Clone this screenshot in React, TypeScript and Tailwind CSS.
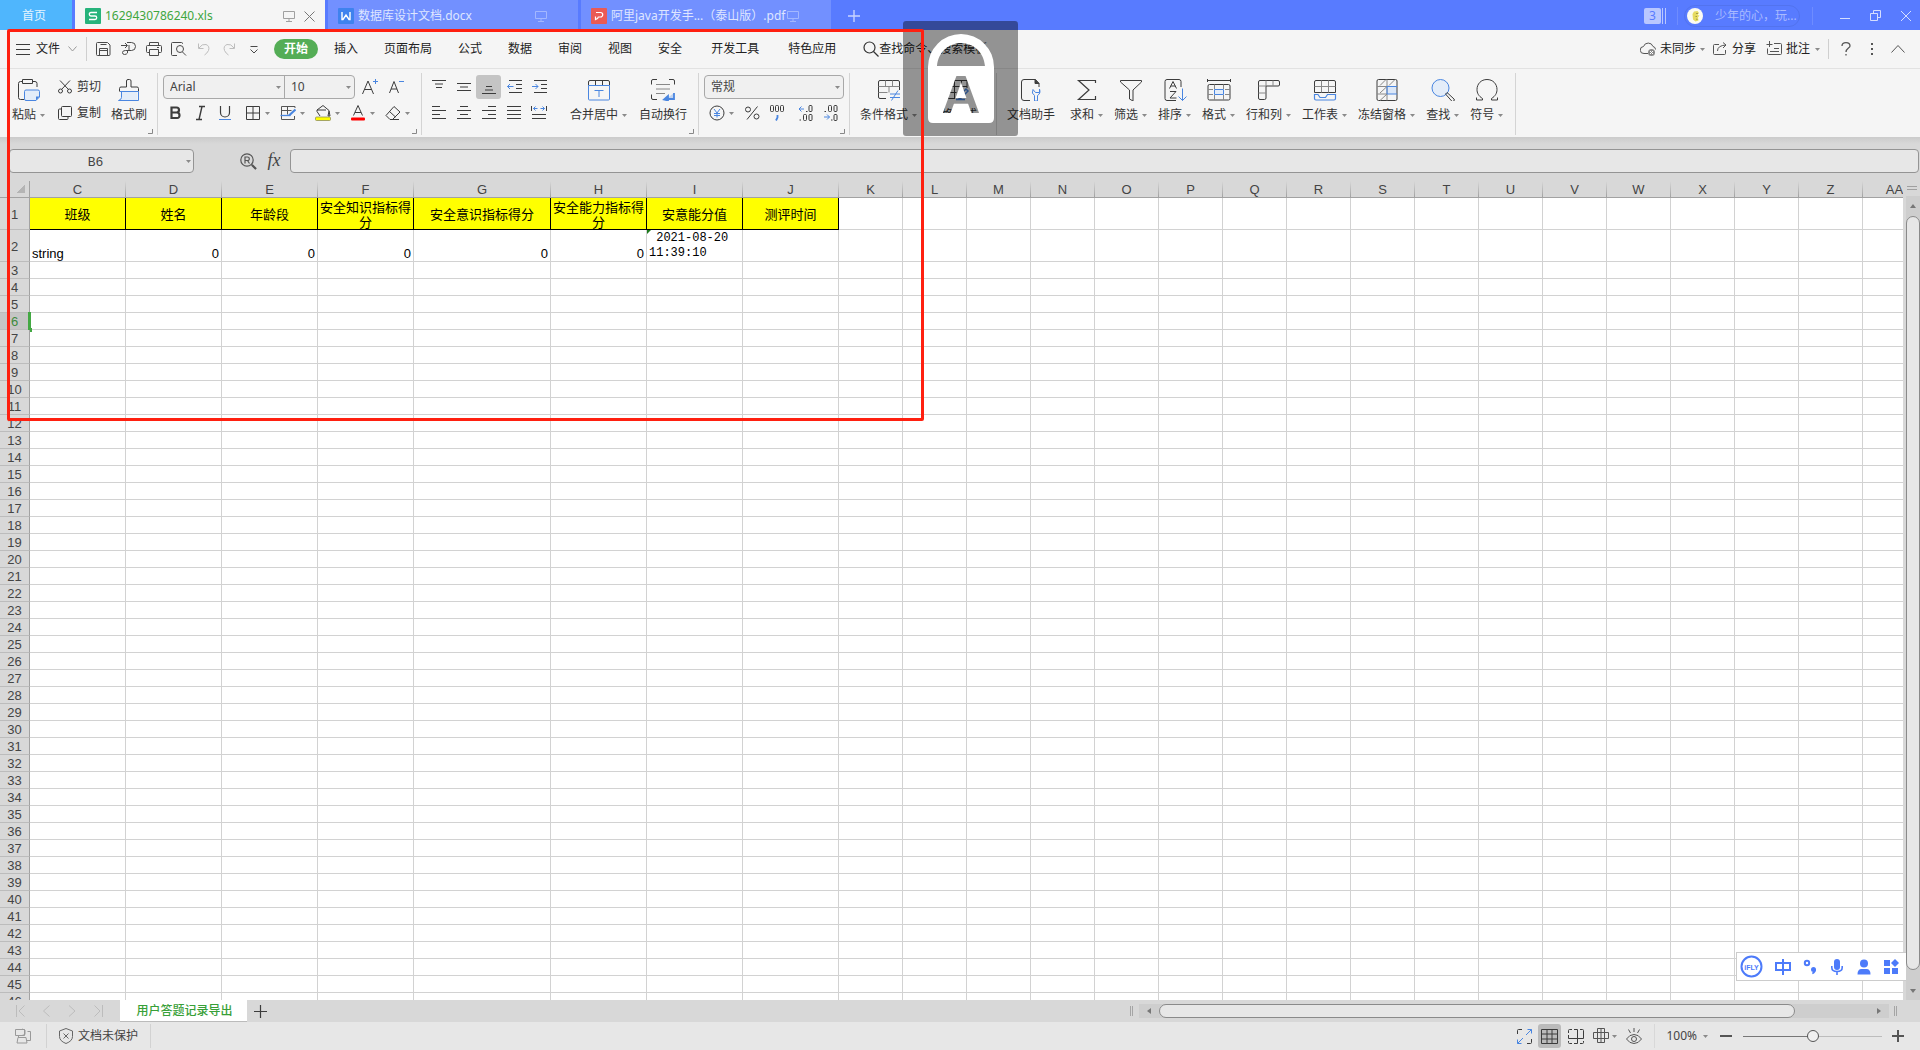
import React from "react";

type Kids = { children?: React.ReactNode };

const DARK = "#3c3c3c";
const BLUE = "#4a86e0";

function Ico({ w = 16, h = 16, stroke = DARK, sw = 1, children }: Kids & { w?: number; h?: number; stroke?: string; sw?: number }) {
  return (
    <svg width={w} height={h} viewBox={`0 0 ${w} ${h}`} fill="none" stroke={stroke} strokeWidth={sw} className="shrink-0" aria-hidden="true">
      {children}
    </svg>
  );
}

function Caret() {
  return (
    <svg width="5" height="3" viewBox="0 0 5 3" className="shrink-0" fill="#8a8a8a" aria-hidden="true">
      <path d="M0 0H5L2.5 3Z" />
    </svg>
  );
}

function Monitor({ color }: { color: string }) {
  return (
    <Ico w={12} h={12} stroke={color}>
      <path d="M.5 1.5h11v7H.5zM6 8.500v2.500M3 11.500h6" />
    </Ico>
  );
}

/* ---------- title bar ---------- */

function TitleBar() {
  return (
    <header className="flex h-[30px] shrink-0 bg-[#587bff] text-xs">
      <button className="w-[72px] bg-[#4fb6fd] pr-1 pt-[2px] text-[#e4f4ff]">首页</button>
      <div className="ml-[3px] flex w-[250px] items-center bg-[#f5f5f5] pl-[10px] pr-[10px] pt-[2px]">
        <span className="flex size-4 items-center justify-center rounded-[1px] bg-[#27b37b]">
          <Ico w={10} h={10} stroke="#fff" sw={1.3}>
            <path d="M9 1.500H3q-1.700 0-1.700 1.700T3 5h4q1.700 0 1.700 1.700T7 8.500H1" />
          </Ico>
        </span>
        <span className="ml-1 flex-1 text-[#3ea63e]">1629430786240.xls</span>
        <Monitor color="#a0a0a0" />
        <button aria-label="关闭标签" className="ml-[9px]">
          <Ico w={11} h={11} stroke="#777">
            <path d="M.5.5l10 10M10.500.5l-10 10" />
          </Ico>
        </button>
      </div>
      <div className="ml-[3px] flex w-[250px] items-center bg-[#7290ff] pl-[10px] pt-[2px] text-[#dfe6ff]">
        <span className="flex size-4 items-center justify-center rounded-[1px] bg-[#3f82ee]">
          <Ico w={10} h={10} stroke="#fff" sw={1.4}>
            <path d="M1 1v7.500h1L5 4l3 4.500h1V1" />
          </Ico>
        </span>
        <span className="ml-1 flex-1">数据库设计文档.docx</span>
        <span className="mr-[31px]">
          <Monitor color="#a3b7ff" />
        </span>
      </div>
      <div className="ml-[3px] flex w-[250px] items-center bg-[#7290ff] pl-[10px] pt-[2px] text-[#dfe6ff]">
        <span className="flex size-4 items-center justify-center rounded-[1px] bg-[#ea5a55]">
          <Ico w={10} h={10} stroke="#fff" sw={1.2}>
            <path d="M2 1.500h4.500a2.200 2.200 0 010 4.500H4.500q-.5 0-.5.500t-.5 1L1.500 8.500V5.500" />
          </Ico>
        </span>
        <span className="ml-1 mr-[2px] whitespace-nowrap">阿里java开发手...（泰山版）.pdf</span>
        <Monitor color="#a3b7ff" />
      </div>
      <button aria-label="新建标签" className="ml-[17px] pt-[2px]">
        <Ico w={12} h={12} stroke="#c8d3ff" sw={1.400}>
          <path d="M6 0v12M0 6h12" />
        </Ico>
      </button>
      <div className="ml-auto flex items-center pt-[2px] text-[#a9baff]">
        <span className="flex h-4 w-[17px] items-center justify-center rounded-[2px] bg-[#b9c7ff] text-xs leading-4 text-[#587bff]">3</span>
        <span className="ml-px h-4 w-1 border-x border-[#b9c7ff]" />
        <span className="ml-[11px] h-[18px] w-px bg-[#6e8cff]" />
        <button className="ml-[6px] flex h-[22px] w-[116px] items-center rounded-full border border-[#5273ee] pl-[2px]">
          <svg width="16" height="16" viewBox="0 0 16 16" aria-hidden="true">
            <circle cx="8" cy="8" r="8" fill="#fbfbf3" />
            <path d="M5.500 6L7 3.500l3.500-.5L12 5l-1.500 2 2 .5-1.500 2 .5 3-3 1-2.500-2z" fill="#e6db62" />
            <path d="M9 5.500h2M8.500 8.500h1.500M9 11l1.500.5" stroke="#9b9346" strokeWidth=".9" />
          </svg>
          <span className="ml-3 whitespace-nowrap">少年的心，玩...</span>
        </button>
        <span className="ml-3 h-[18px] w-px bg-[#6e8cff]" />
        <button aria-label="最小化" className="ml-[27px]">
          <Ico w={10} h={12} stroke="#d5deff">
            <path d="M0 8.500h10" />
          </Ico>
        </button>
        <button aria-label="还原" className="ml-5">
          <Ico w={11} h={12} stroke="#d5deff">
            <path d="M.5 3.500h7v7h-7zM3.500 3V.5h7v7H8" />
          </Ico>
        </button>
        <button aria-label="关闭" className="ml-5 mr-[9px]">
          <Ico w={10} h={10} stroke="#d5deff">
            <path d="M0 0l10 10M10 0L0 10" />
          </Ico>
        </button>
      </div>
    </header>
  );
}

/* ---------- menu bar ---------- */

const quick: { label: string; dim?: boolean; art: React.ReactNode }[] = [
  { label: "保存", art: <path d="M1.500 1.500h10l2.500 2.500v9.500a1 1 0 01-1 1h-11.500a1 1 0 01-1-1v-11a1 1 0 011-1zM4.500 3.500h6M3.500 14.500v-7h8v7M3.500 9.500h8" /> },
  { label: "输出为PDF", art: <path d="M0 4.500h6M4 2l2.500 2.500L4 7M6 1.500h4.500a4 4 0 010 8H8V4M8 9.500H4.500q-3 0-3 2t2 2 3-1.500V9.500" /> },
  { label: "打印", art: <path d="M3.500 4.500v-3h9v3M3.500 11.500h-2a1 1 0 01-1-1v-5a1 1 0 011-1h13a1 1 0 011 1v5a1 1 0 01-1 1h-2M3.500 8.500h9v6h-9zM11 6.500h2" /> },
  { label: "打印预览", art: <path d="M6 14.500H1.500a1 1 0 01-1-1v-11a1 1 0 011-1h9a1 1 0 011 1V3M9 4.500a3.500 3.500 0 110 7 3.500 3.500 0 010-7M11.500 11l3.500 3.500" /> },
  { label: "撤销", dim: true, art: <path d="M2.500 2.500v5H7.500M3 7q3-4.500 7-3.500 4 1.500 2.500 6-1.500 3-4 4.500" /> },
  { label: "恢复", dim: true, art: <path d="M13.500 2.500v5H8.500M13 7q-3-4.500-7-3.500-4 1.500-2.500 6 1.500 3 4 4.500" /> },
  { label: "更多", art: <path d="M4.500 5.500h7M4.500 8.500l3.500 3.500 3.500-3.500" /> },
];

const tabs: [string, boolean][] = [
  ["插入", false],
  ["页面布局", false],
  ["公式", false],
  ["数据", false],
  ["审阅", false],
  ["视图", false],
  ["安全", false],
  ["开发工具", true],
  ["特色应用", false],
];

function MenuBar() {
  return (
    <nav className="flex h-[39px] shrink-0 items-center border-b border-[#e2e2e2] bg-[#f5f5f5] pl-4 text-xs text-[#222]">
      <button className="flex items-center">
        <Ico w={14} h={11}>
          <path d="M0 .5h14M0 5.500h14M0 10.500h14" />
        </Ico>
        <span className="ml-[6px]">文件</span>
        <span className="ml-2">
          <Ico w={9} h={6} stroke="#999">
            <path d="M.5.500l4 4.500 4-4.500" />
          </Ico>
        </span>
      </button>
      <span className="ml-[9px] mr-1 h-6 w-px bg-[#cfcfcf]" />
      {quick.map((q) => (
        <button key={q.label} aria-label={q.label} className="flex w-[25px] justify-center">
          <Ico stroke={q.dim ? "#bdbdbd" : "#4a4a4a"}>{q.art}</Ico>
        </button>
      ))}
      <button className="ml-2 mr-[3px] h-5 w-11 rounded-full bg-[#54ad56] font-bold text-white">开始</button>
      {tabs.map(([t, wide]) => (
        <button key={t} className={wide ? "px-4" : "px-[13px]"}>
          {t}
        </button>
      ))}
      <label className="ml-[14px] flex items-center">
        <Ico stroke="#333" sw={1.2}>
          <circle cx="6.500" cy="6.500" r="5.500" />
          <path d="M10.500 10.500l5 5" />
        </Ico>
        <input aria-label="查找命令、搜索模板" placeholder="查找命令、搜索模板" className="w-28 bg-transparent outline-none placeholder:text-[#222] placeholder:opacity-100" />
      </label>
      <div className="ml-auto flex items-center">
        <button className="flex items-center">
          <Ico stroke="#555">
            <path d="M8 12.500H4a3.500 3.500 0 01-.5-7 5 5 0 019.500 0q2.500.5 2.500 3" />
            <circle cx="11.500" cy="11.500" r="3.500" fill="#8a8a8a" stroke="none" />
            <path d="M10 10l3 3M13 10l-3 3" stroke="#fff" />
          </Ico>
          <span className="ml-1 mr-1">未同步</span>
          <Caret />
        </button>
        <button className="ml-2 flex items-center">
          <Ico w={14} h={14} stroke="#555">
            <path d="M6 2.500H1.500a1 1 0 00-1 1v8a1 1 0 001 1h10a1 1 0 001-1V8M4.500 9q0-5.500 8.500-6M10 .5l3 2.500-3 3" />
          </Ico>
          <span className="ml-[5px]">分享</span>
        </button>
        <button className="ml-[10px] flex items-center">
          <Ico stroke="#555">
            <path d="M3.500 0v6M.5 3.500h6M8 2.500h6.500a1 1 0 011 1v9a1 1 0 01-1 1h-12a1 1 0 01-1-1V7.500M8 7.500h5M4 10.500h9" />
          </Ico>
          <span className="ml-1 mr-[5px]">批注</span>
          <Caret />
        </button>
        <span className="ml-2 h-5 w-px bg-[#cfcfcf]" />
        <button aria-label="帮助" className="ml-3">
          <Ico w={10} h={14} stroke="#555" sw={1.3}>
            <path d="M1 4Q1 .700 5 .700T9 4c0 2-4 2.500-4 6M5 12v1.500" />
          </Ico>
        </button>
        <button aria-label="更多选项" className="ml-5">
          <Ico w={2} h={12} stroke="none">
            <path d="M0 0h2v2H0zM0 5h2v2H0zM0 10h2v2H0z" fill="#555" />
          </Ico>
        </button>
        <button aria-label="折叠功能区" className="ml-[18px] mr-[15px]">
          <Ico w={14} h={8} stroke="#555">
            <path d="M.5 7.500l6.500-7 6.500 7" />
          </Ico>
        </button>
      </div>
    </nav>
  );
}

/* ---------- ribbon ---------- */

function Group({ className, corner, children }: Kids & { className: string; corner?: boolean }) {
  return (
    <section className={`relative my-1 flex h-[62px] shrink-0 items-start border-r border-[#d4d4d4] ${className}`}>
      {children}
      {corner && (
        <span className="absolute bottom-[1px] right-1">
          <Ico w={5} h={5} stroke="#888">
            <path d="M4.500 0v4.500H0" />
          </Ico>
        </span>
      )}
    </section>
  );
}

function Big({ label, caret, children }: Kids & { label: string; caret?: boolean }) {
  return (
    <button className="flex flex-col items-center pt-[6px]">
      <Ico w={24} h={22}>{children}</Ico>
      <span className="mt-[6px] flex items-center gap-1 whitespace-nowrap leading-4">
        {label}
        {caret && <Caret />}
      </span>
    </button>
  );
}

function Small({ label, caret, wide, active, children }: Kids & { label: string; caret?: boolean; wide?: boolean; active?: boolean }) {
  return (
    <button
      aria-label={label}
      className={`flex h-6 items-center justify-center gap-1 rounded-[3px] ${wide ? "w-[35px]" : "w-[25px]"} ${active ? "bg-[#c4c4c4]" : ""}`}
    >
      <Ico>{children}</Ico>
      {caret && <Caret />}
    </button>
  );
}

function Picker({ label, value, className }: { label: string; value: string; className: string }) {
  return (
    <label className={`relative flex h-full items-center ${className}`}>
      <select aria-label={label} className="h-full w-full appearance-none bg-transparent pl-[6px] text-xs text-[#444] outline-none">
        <option>{value}</option>
      </select>
      <span className="pointer-events-none absolute right-[3px] top-[10px]">
        <Caret />
      </span>
    </label>
  );
}

function Ribbon() {
  return (
    <div className="relative z-10 flex h-[68px] shrink-0 overflow-hidden bg-[#f5f5f5] text-xs text-[#333]">
      <Group className="w-[158px] pl-3" corner>
        <Big label="粘贴" caret>
          <path d="M7 20.500H3.500a2 2 0 01-2-2v-14a2 2 0 012-2h2M15.500 2.500H18a2 2 0 012 2V8M5.500.5h10v4h-10z" />
          <path d="M9 11h12q1.500 0 1.500 1.500V18l-3.500 3.500H9q-1.500 0-1.500-1.500v-7.500Q7.500 11 9 11z" stroke={BLUE} fill="#e4edf9" />
          <path d="M22.500 17.500L19 21.500v-4z" fill={BLUE} stroke="none" />
        </Big>
        <div className="ml-[13px] flex flex-col gap-[2px] pt-[2px]">
          <button className="flex h-6 items-center">
            <Ico w={14} h={14}>
              <path d="M2 .5l8.500 9M12 .5l-8.500 9" />
              <circle cx="2.500" cy="11" r="2" />
              <circle cx="11.500" cy="11" r="2" />
            </Ico>
            <span className="ml-[5px]">剪切</span>
          </button>
          <button className="flex h-6 items-center">
            <Ico w={14} h={14}>
              <path d="M4.500.5h8a1 1 0 011 1v8a1 1 0 01-1 1h-8a1 1 0 01-1-1v-8a1 1 0 011-1zM3.500 3h-2a1 1 0 00-1 1v8.500a1 1 0 001 1H9a1 1 0 001-1v-2" />
            </Ico>
            <span className="ml-[5px]">复制</span>
          </button>
        </div>
        <div className="ml-[10px]">
          <Big label="格式刷">
            <path d="M4 12h16v9.500H4z" fill="#e4edf9" stroke="none" />
            <path d="M2.500 12.500V9.500q0-1.500 1.500-1.500h5.500V2q0-1.500 1.500-1.500h1.500Q14 .5 14 2v6h6q1.500 0 1.500 1.500v3" />
            <path d="M3 12.500h18.500M4.500 12.500v6q0 2-3 3h20v-9" stroke={BLUE} />
          </Big>
        </div>
      </Group>

      <Group className="w-[264px] flex-col gap-[2px] pl-[5px] pt-[2px]" corner>
        <div className="flex">
          <div className="flex h-6 w-[192px] rounded-[4px] border border-[#a8a8a8] bg-[#f0f0f0]">
            <Picker label="字体" value="Arial" className="w-[121px] border-r border-[#a8a8a8]" />
            <Picker label="字号" value="10" className="flex-1" />
          </div>
          <div className="ml-[2px] flex">
            <button aria-label="增大字号" className="flex h-6 w-[26px] items-center justify-center">
              <Ico>
                <path d="M.5 15L6 2l5.500 13M2.500 10.500h7" />
                <path d="M13.500 0v5M11 2.500h5" stroke={BLUE} />
              </Ico>
            </button>
            <button aria-label="减小字号" className="flex h-6 w-[26px] items-center justify-center">
              <Ico>
                <path d="M1.500 14L6 2.500 10.500 14M3 10h6" />
                <path d="M11 2.500h5" stroke={BLUE} />
              </Ico>
            </button>
          </div>
        </div>
        <div className="flex">
          <Small label="加粗">
            <path d="M3.500 2.500h5q2.500 0 2.500 2.500T8.500 7.500H3.500zM3.500 7.500H9q2.500 0 2.500 2.800T9 13H3.500z" strokeWidth="2.200" />
          </Small>
          <Small label="倾斜">
            <path d="M6 1.500h6M3 14.500h6M9 1.500L6 14.500" strokeWidth="1.400" />
          </Small>
          <Small label="下划线">
            <path d="M2.500 1v6.500a4.500 4.500 0 009 0V1" strokeWidth="1.200" />
            <path d="M1 14.500h12" stroke={BLUE} />
          </Small>
          <div className="ml-[2px] flex">
            <Small label="边框" caret wide>
              <path d="M1.500 1.500h13v13h-13zM8 1.500v13M1.500 8h13" />
            </Small>
            <Small label="绘图边框" caret wide>
              <path d="M15 3V1.500H1.500v13h13V11M1.500 5.500h10M7.500 1.500v8" stroke="#555" />
              <path d="M9 10.500l6.500-6" stroke={BLUE} strokeWidth="2.200" />
              <path d="M.5 10.500h10" stroke={BLUE} strokeWidth="1.300" />
            </Small>
            <Small label="填充颜色" caret wide>
              <path d="M8 .5l6 5 1 5.500H13L14 6M8 .5L2 5h9M2 5v1.500L5 11" />
              <rect x=".5" y="12" width="15" height="3.500" rx="1" fill="#ffff00" stroke="#8f8f5a" strokeWidth=".8" />
            </Small>
            <Small label="字体颜色" caret wide>
              <path d="M3.500 10.500L8 .5l4.500 10M5 7.500h6" />
              <rect x="1" y="12.500" width="14" height="3" rx="1" fill="#ff0000" stroke="none" />
            </Small>
            <Small label="清除" caret wide>
              <path d="M9 1.500l6 5.500-7.500 7.500H5L1 10.500zM4.500 6.500l6 5.500M5 14.500h9" />
            </Small>
          </div>
        </div>
      </Group>

      <Group className="w-[277px] pl-1" corner>
        <div className="grid grid-cols-5 gap-y-[2px] pt-[2px]">
          <Small label="顶端对齐">
            <path d="M1 1.500h14M4 5h8M5 8.500h6" />
          </Small>
          <Small label="垂直居中">
            <path d="M1 4.500h14M4 8h8M1 11.500h14" />
          </Small>
          <Small label="底端对齐" active>
            <path d="M5 7.500h6M4 11h8M1 14.500h14" />
          </Small>
          <Small label="减少缩进量">
            <path d="M3 1.500h13M10 5.500h6M10 9.500h6M3 13.500h13" />
            <path d="M7.500 7.500h-6M4 5L1.500 7.500 4 10" stroke={BLUE} />
          </Small>
          <Small label="增加缩进量">
            <path d="M3 1.500h13M10 5.500h6M10 9.500h6M3 13.500h13" />
            <path d="M1 7.500h6M4.500 5L7 7.500 4.500 10" stroke={BLUE} />
          </Small>
          <Small label="左对齐">
            <path d="M1 1.500h8M1 5.500h14M1 9.500h8M1 13.500h14" />
          </Small>
          <Small label="居中">
            <path d="M4 1.500h8M1 5.500h14M4 9.500h8M1 13.500h14" />
          </Small>
          <Small label="右对齐">
            <path d="M7 1.500h8M1 5.500h14M7 9.500h8M1 13.500h14" />
          </Small>
          <Small label="两端对齐">
            <path d="M1 1.500h14M1 5.500h14M1 9.500h14M1 13.500h14" />
          </Small>
          <Small label="分散对齐">
            <path d="M.5 1v5M15.500 1v5M1 9.500h14M1 13.500h14" />
            <path d="M2.500 3.500h4M9.500 3.500h4M4.500 1.500l-2 2 2 2M11.500 1.500l2 2-2 2" stroke={BLUE} />
          </Small>
        </div>
        <div className="ml-[19px] flex gap-3">
          <Big label="合并居中" caret>
            <path d="M1.500 6.500V3q0-1.500 1.500-1.500h18q1.500 0 1.500 1.500v3.500M8.500 1.500v5M15.500 1.500v5" />
            <path d="M1.500 6.500h21V20q0 1-1 1h-19q-1 0-1-1zM7.500 11.500h9M12 11.500v6.500" stroke={BLUE} />
          </Big>
          <Big label="自动换行">
            <path d="M.5 5.500V2Q.5.500 2 .5h4M18 .5h4q1.500 0 1.500 1.500v3.500M.5 15.500V19q0 1.500 1.500 1.500h4" />
            <path d="M5 5.500h14M5 10h14M5 14.500h9" stroke="#888" />
            <path d="M23 14v6h-8M17 17l-4 3.500 4 1z" stroke={BLUE} strokeWidth="1.800" fill={BLUE} fillOpacity=".3" />
          </Big>
        </div>
      </Group>

      <Group className="w-[151px] flex-col gap-[2px] pl-[5px] pt-[2px]" corner>
        <div className="h-6 w-[140px] rounded-[4px] border border-[#a8a8a8] bg-[#f0f0f0]">
          <Picker label="数字格式" value="常规" className="w-full" />
        </div>
        <div className="flex">
          <Small label="货币格式" caret wide>
            <circle cx="8" cy="8" r="7" />
            <path d="M5 4l3 4 3-4M5 8.500h6M5 10.500h6M8 8v4.500" stroke={BLUE} />
          </Small>
          <Small label="百分比样式">
            <circle cx="4" cy="4.500" r="2.500" />
            <circle cx="12.500" cy="11.500" r="2.500" />
            <path d="M13.500 1.500L3 14.500" />
          </Small>
          <Small label="千位分隔样式">
            <rect x="1.500" y=".5" width="3" height="6" rx="1" />
            <rect x="6.500" y=".5" width="3" height="6" rx="1" />
            <rect x="11.500" y=".5" width="3" height="6" rx="1" />
            <path d="M8.500 10v2.500l-1.500 3" stroke={BLUE} strokeWidth="1.800" />
          </Small>
          <div className="ml-1 flex">
            <Small label="增加小数位数">
              <path d="M1 4h5M3.500 1.500L1 4l2.500 2.500" stroke={BLUE} />
              <rect x="11" y=".5" width="3" height="6" rx="1" />
              <rect x="5.500" y="9.500" width="3" height="6" rx="1" />
              <rect x="11" y="9.500" width="3" height="6" rx="1" />
              <path d="M8 6.500h1.500M1.500 15h1.500" />
            </Small>
            <Small label="减少小数位数">
              <rect x="5.500" y=".5" width="3" height="6" rx="1" />
              <rect x="11" y=".5" width="3" height="6" rx="1" />
              <rect x="11" y="9.500" width="3" height="6" rx="1" />
              <path d="M1.500 6.500h1.500M8 15h1.500" />
              <path d="M1 12h5.500M4 9.500L6.500 12 4 14.500" stroke={BLUE} />
            </Small>
          </div>
        </div>
      </Group>

      <Group className="w-[147px] gap-3 pl-[10px]">
        <Big label="条件格式" caret>
          <path d="M9 19.500H3q-1.500 0-1.500-1.500V3Q1.500 1.500 3 1.500h18q1.500 0 1.500 1.500v8" />
          <path d="M1.500 7.500h21M1.500 13.500h9M8.500 1.500v6M15.500 1.500v6M12 7.500v6" stroke="#888" />
          <path d="M13 15h10M13 18.500h10M21 11.500l-6.500 10" stroke={BLUE} />
        </Big>
        <Big label="表格样式" caret>
          <path d="M9 19.500H3q-1.500 0-1.500-1.500V3Q1.500 1.500 3 1.500h18V9M1.500 7.500H21M1.500 13.500h9M8.500 1.500v18M15.500 1.500v8" />
          <path d="M10 20.500h9M12 18l8-8 2 2-8 8z" stroke={BLUE} strokeWidth="1.500" />
        </Big>
      </Group>

      <Group className="w-[519px] gap-[11px] pl-[10px]">
        <div className="mr-1">
          <Big label="文档助手">
            <path d="M11 21.500H5q-2.500 0-2.500-2.500V3Q2.500.5 5 .5h11.500l3.500 4V8" />
            <path d="M16 .5v4h4z" fill={DARK} />
            <path d="M14 10.500q-2 4 1.500 6V22h3v-5.500q3.500-2 2-6.500v3.500h-4z" stroke={BLUE} />
          </Big>
        </div>
        <Big label="求和" caret>
          <path d="M20.500 4V1.500h-17L14 11 3.500 20.500h17V17" strokeWidth="1.200" />
        </Big>
        <Big label="筛选" caret>
          <path d="M1.500 1.500h21v1.500L14 11v11l-3.500-2v-9L1.500 3z" />
        </Big>
        <Big label="排序" caret>
          <path d="M13 21.500H4q-2 0-2-2V2.500Q2 .5 4 .5h12q2 0 2 2V8M6.500 9.500l3.500-7 3.500 7M7.700 7h4.600M7 12.500h6L7 19h6.500" />
          <path d="M19.500 9.500v12M15.500 17.500l4 4 4-4" stroke={BLUE} />
        </Big>
        <Big label="格式" caret>
          <path d="M.5 0v3M.5 1.500h23M23.500 0v3" />
          <rect x="1" y="5.500" width="22" height="15.500" rx="1.500" />
          <path d="M7.500 5.500V10M16.500 5.500V10M7.500 16v5M16.500 16v5M1 10.500h5M18 10.500h5M1 15.500h5M18 15.500h5" stroke="#888" />
          <path d="M7.500 10.500h9v5h-9z" stroke={BLUE} fill="#e4edf9" />
        </Big>
        <Big label="行和列" caret>
          <path d="M3 1.500h18q1.500 0 1.500 1.500v3q0 1-1.500 1H9v12q0 1.500-1.500 1.500H3q-1.500 0-1.500-1.500V3Q1.500 1.500 3 1.500z" />
          <path d="M9 1.500V7M16 1.500V7M1.500 7H9M1.500 14H9" stroke="#888" />
        </Big>
        <Big label="工作表" caret>
          <path d="M1.500 13.500V3Q1.500 1.500 3 1.500h18q1.500 0 1.500 1.500v10.500z" />
          <path d="M8.500 1.500v12M15.500 1.500v12M1.500 7.500h21" stroke="#888" />
          <path d="M1.500 15.500v4q0 1.500 1.500 1.500h18q1.500 0 1.500-1.500v-4h-8l-2 3H7l-2-3z" stroke={BLUE} strokeWidth="1.200" />
        </Big>
        <Big label="冻结窗格" caret>
          <path d="M12 7.500h10V15H12z" fill="#dbe7f8" stroke="none" />
          <rect x="2" y=".5" width="20" height="21" rx="1.500" />
          <path d="M12 .5v21M2 7.500h10M2 15h10M5 6.500l6-6M5 14L12 7.500M5 21.500L12 15M14 6.500l6-6" stroke="#888" />
          <path d="M12 7.500h10M12 15h10M12 7.500V15" stroke={BLUE} />
        </Big>
        <Big label="查找" caret>
          <circle cx="9.500" cy="9" r="8.500" stroke={BLUE} fill="#e4edf9" />
          <path d="M14.500 15l1.500-1.500 7 6.500q1 1-.3 2t-2 0z" />
        </Big>
        <Big label="符号" caret>
          <path d="M1.500 18.500v2.500h6v-1.500C3.500 17 2 14 2 10.500 2 5 6 .5 12 .5s10 4.500 10 10c0 3.500-1.500 6.500-5.500 9V21h6v-2.500" />
        </Big>
      </Group>
    </div>
  );
}

/* ---------- formula bar ---------- */

function FormulaBar() {
  return (
    <div className="flex h-11 shrink-0 items-start bg-[linear-gradient(to_bottom,#cbcbcb,#d8d8d8_7px)] pl-[9px] pt-3">
      <label className="relative flex w-[185px]">
        <input
          aria-label="名称框"
          defaultValue="B6"
          className="h-6 w-full rounded-[4px] border border-[#949494] bg-[#e7e7e7] pr-3 pt-[2px] text-center font-['Liberation_Mono',monospace] text-[13px] text-[#444] outline-none"
        />
        <span className="absolute right-[3px] top-[11px]">
          <Caret />
        </span>
      </label>
      <button aria-label="查找引用" className="ml-[46px] mt-1">
        <Ico w={17} h={17} stroke="#555" sw={1.2}>
          <circle cx="7" cy="7" r="6.200" />
          <path d="M5 10.500V4h2.500q1.800 0 1.800 1.800T7.500 7.500H5M7.500 7.500l2 3M11.500 11.500l4.500 4.500" />
          <path d="M12 12l4 4" strokeWidth="2.200" />
        </Ico>
      </button>
      <button className="ml-2 mt-px w-[18px] font-['Liberation_Serif',serif] text-lg italic leading-5 text-[#444]">fx</button>
      <input aria-label="编辑栏" className="ml-[7px] mr-px h-6 min-w-0 flex-1 rounded-[4px] border border-[#949494] bg-[#e7e7e7] px-2 text-xs outline-none" />
    </div>
  );
}

/* ---------- sheet ---------- */

type Col = { id: string; width: number; title?: string; value?: string };

const cols: Col[] = [
  { id: "C", width: 96, title: "班级", value: "string" },
  { id: "D", width: 96, title: "姓名", value: "0" },
  { id: "E", width: 96, title: "年龄段", value: "0" },
  { id: "F", width: 96, title: "安全知识指标得分", value: "0" },
  { id: "G", width: 137, title: "安全意识指标得分", value: "0" },
  { id: "H", width: 96, title: "安全能力指标得分", value: "0" },
  { id: "I", width: 96, title: "安意能分值", value: " 2021-08-20\n11:39:10" },
  { id: "J", width: 96, title: "测评时间" },
  ..."KLMNOPQRSTUVWXYZ".split("").map((id) => ({ id, width: 64 })),
  { id: "AA", width: 64 },
];

const rows = Array.from({ length: 46 }, (_, i) => i + 1);

function Cell({ row, col }: { row: number; col: Col }) {
  if (row === 1 && col.title)
    return (
      <td className="border-b border-r border-black bg-[#ffff00] p-0 text-center font-['Noto_Sans_CJK_SC',sans-serif] text-[13px] leading-[15px] text-black">
        {col.title}
      </td>
    );
  if (row === 2 && col.id === "I")
    return (
      <td className="relative border-b border-r border-[#d2d2d2] p-0 pl-[2px] pt-px align-bottom font-['Liberation_Mono',monospace] text-xs leading-[15px] text-black">
        <span className="absolute left-0 top-0">
          <Ico w={4} h={4} stroke="none">
            <path d="M0 0h4L0 4z" fill="#1e7a1e" />
          </Ico>
        </span>
        <span className="whitespace-pre-wrap">{col.value}</span>
      </td>
    );
  if (row === 2 && col.value)
    return (
      <td className={`border-b border-r border-[#d2d2d2] p-0 px-[2px] align-bottom text-[13px] leading-[14px] text-black ${col.id === "C" ? "text-left" : "text-right"}`}>
        {col.value}
      </td>
    );
  return <td className="border-b border-r border-[#d2d2d2] p-0" />;
}

function Sheet() {
  return (
    <div className="flex min-h-0 flex-1 bg-[#d8d8d8]">
      <main className="min-w-0 flex-1 overflow-hidden font-['Liberation_Sans',Arial,sans-serif]">
        <table className="w-max table-fixed border-separate border-spacing-0 bg-white text-[13px] leading-[15px] text-[#444]">
          <colgroup>
            <col style={{ width: 30 }} />
            {cols.map((c) => (
              <col key={c.id} style={{ width: c.width }} />
            ))}
          </colgroup>
          <thead>
            <tr className="h-[17px]">
              <th aria-label="全选" className="border-b border-r border-[#a2a2a2] bg-[#d8d8d8] p-0">
                <span className="ml-[17px] block size-2 bg-[linear-gradient(135deg,transparent_50%,#b4b4b4_50%)]" />
              </th>
              {cols.map((c) => (
                <th
                  key={c.id}
                  scope="col"
                  className="border-b border-[#a2a2a2] bg-[#d8d8d8] bg-[linear-gradient(to_bottom,#d8d8d8,#a2a2a2)] bg-[length:1px_100%] bg-right bg-no-repeat p-0 pr-px pt-px font-normal"
                >
                  {c.id}
                </th>
              ))}
            </tr>
          </thead>
          <tbody>
            {rows.map((r) => (
              <tr key={r} className={r <= 2 ? "h-8" : "h-[17px]"}>
                <th
                  scope="row"
                  className={`relative border-b border-r border-b-[#bcbcbc] border-r-[#a2a2a2] p-0 pt-px font-normal ${r === 6 ? "bg-[#c5c5c5] text-[#3c8a3c]" : "bg-[#d8d8d8]"}`}
                >
                  {r}
                  {r === 6 && (
                    <>
                      <span className="absolute -right-[2px] -top-px h-4 w-[3px] bg-[#43a843]" />
                      <span className="absolute -bottom-[3px] -right-[3px] size-1 bg-[#43a843]" />
                    </>
                  )}
                </th>
                {cols.map((c) => (
                  <Cell key={c.id} row={r} col={c} />
                ))}
              </tr>
            ))}
          </tbody>
        </table>
      </main>
      <aside className="flex w-[17px] flex-col items-end">
        <div className="h-[15px] w-[14px] pt-[5px]">
          <Ico w={11} h={4} stroke="#a0a0a0">
            <path d="M1 .5h10M1 3.500h10" />
          </Ico>
        </div>
        <div className="flex min-h-0 w-[14px] flex-1 flex-col items-center bg-[#cecece]">
          <button aria-label="向上滚动" className="flex h-5 items-center">
            <Ico w={6} h={4} stroke="none">
              <path d="M0 4h6L3 0z" fill="#777" />
            </Ico>
          </button>
          <div className="w-[14px] flex-1 rounded-full border border-[#8a8a8a] bg-[#e7e7e7]" />
          <button aria-label="向下滚动" className="flex h-[30px] items-center pt-3">
            <Ico w={6} h={4} stroke="none">
              <path d="M0 0h6L3 4z" fill="#777" />
            </Ico>
          </button>
        </div>
      </aside>
    </div>
  );
}

/* ---------- sheet tabs and status bar ---------- */

function SheetTabs() {
  const nav: [string, string][] = [
    ["第一个", "M1.500 0v12M9.500.5L4 6l5.500 5.500"],
    ["上一个", "M8.500.5L2.500 6l6 5.500"],
    ["下一个", "M2 .5L8 6l-6 5.500"],
    ["最后一个", "M9.500 0v12M1.500.5L7 6l-5.500 5.500"],
  ];
  return (
    <div className="flex h-[22px] shrink-0 items-center bg-[#d8d8d8] pl-[15px] text-xs">
      {nav.map(([label, d]) => (
        <button key={label} aria-label={label} className="mr-4">
          <Ico w={10} h={12} stroke="#bcbcbc">
            <path d={d} />
          </Ico>
        </button>
      ))}
      <button className="ml-px h-full w-[127px] border-b border-[#bbb] bg-white pl-[2px] pt-px font-medium text-[#38a038]">用户答题记录导出</button>
      <button aria-label="新建工作表" className="ml-[7px]">
        <Ico w={13} h={13} sw={1.200}>
          <path d="M6.500 0v13M0 6.500h13" />
        </Ico>
      </button>
      <div className="ml-auto flex items-center">
        <span className="h-[10px] w-[3px] border-x border-[#a5a5a5]" />
        <div className="ml-[6px] flex h-[14px] w-[750px] items-center bg-[#cecece]">
          <button aria-label="向左滚动" className="flex w-5 justify-center">
            <Ico w={4} h={6} stroke="none">
              <path d="M4 0v6L0 3z" fill="#777" />
            </Ico>
          </button>
          <div className="h-[14px] w-[636px] rounded-full border border-[#8a8a8a] bg-[#e7e7e7]" />
          <button aria-label="向右滚动" className="ml-auto mr-2">
            <Ico w={4} h={6} stroke="none">
              <path d="M0 0v6l4-3z" fill="#777" />
            </Ico>
          </button>
        </div>
        <span className="ml-[5px] mr-[23px] h-[10px] w-[3px] border-x border-[#a5a5a5]" />
      </div>
    </div>
  );
}

function StatusBar() {
  return (
    <footer className="flex h-7 shrink-0 items-center bg-[#e7e7e7] pl-[15px] text-xs text-[#444]">
      <button aria-label="宏">
        <Ico stroke="#999">
          <path d="M.5 1.500h9v6h-9zM7 1l3 1v4.500l-3 1M12.500 3.500h3v9H12M3 9.500h8l1 5.500H2zM3.500 7.500v2" />
        </Ico>
      </button>
      <span className="ml-[15px] h-6 w-px bg-[#d2d2d2]" />
      <button className="ml-3 flex items-center">
        <Ico w={14} h={16} stroke="#666">
          <path d="M7 .5l6.500 2.500v5.500q0 4.500-6.500 7-6.500-2.500-6.500-7V3zM4.500 5.500l5 5M9.500 5.500l-5 5" />
        </Ico>
        <span className="ml-[5px]">文档未保护</span>
      </button>
      <span className="ml-3 h-6 w-px bg-[#d2d2d2]" />
      <div className="ml-auto flex items-center">
        <button aria-label="全屏显示">
          <Ico w={15} h={15}>
            <path d="M5 .5H1.500q-1 0-1 1V5M14.500 10v3.500q0 1-1 1H10" />
            <path d="M9 6l5.500-5.500M10.500.5h4v4M6 9L.5 14.500M.5 10.500v4h4" stroke={BLUE} />
          </Ico>
        </button>
        <button aria-label="普通视图" className="ml-[6px] flex h-6 w-[23px] items-center justify-center rounded-[3px] bg-[#bbb]">
          <Ico w={17} h={15}>
            <path d="M.5.5h16v14H.5zM6 .5v14M11 .5v14M.5 5h16M.5 10h16" />
          </Ico>
        </button>
        <button aria-label="分页预览" className="ml-[7px]">
          <Ico w={16} h={15}>
            <path d="M4 .5H1.500q-1 0-1 1V4M6 .5h3.500v9H.5M.5 6v3.500M12 .5h2.500q1 0 1 1v8h-6v5M.5 12v1.500q0 1 1 1H4M6 14.500h3.500M12 14.500h2.500q1 0 1-1V12" />
          </Ico>
        </button>
        <button aria-label="阅读模式" className="ml-[9px] flex items-center gap-[3px]">
          <Ico>
            <path d="M4.500.5h7v14h-7zM.5 4.500h15v6H.5zM8 0v15" stroke="#555" />
          </Ico>
          <Caret />
        </button>
        <button aria-label="护眼模式" className="ml-[9px]">
          <Ico h={17} stroke="#555">
            <path d="M.5 11q3-4.500 7.500-4.500t7.500 4.500q-3 4.500-7.500 4.500T.5 11zM8 0v4M2.500 1.500L4.500 5M13.500 1.500L11.500 5" />
            <circle cx="8" cy="11" r="2.500" />
          </Ico>
        </button>
        <span className="ml-3 h-6 w-px bg-[#d8d8d8]" />
        <button className="ml-[11px] flex items-center gap-[6px]">
          100%
          <Caret />
        </button>
        <button aria-label="缩小" className="ml-3 flex h-4 w-3 items-center">
          <span className="block h-[2px] w-full bg-[#555]" />
        </button>
        <input
          type="range"
          aria-label="显示比例"
          defaultValue={50}
          className="ml-[11px] h-3 w-[139px] appearance-none bg-[linear-gradient(to_right,#777_50%,#bdbdbd_50%)] bg-[length:100%_1px] bg-center bg-no-repeat [&::-webkit-slider-thumb]:size-3 [&::-webkit-slider-thumb]:appearance-none [&::-webkit-slider-thumb]:rounded-full [&::-webkit-slider-thumb]:border [&::-webkit-slider-thumb]:border-[#555] [&::-webkit-slider-thumb]:bg-[#f0f0f0]"
        />
        <button aria-label="放大" className="ml-[10px] mr-4">
          <Ico w={12} h={12} stroke="#555" sw={2}>
            <path d="M6 0v12M0 6h12" />
          </Ico>
        </button>
      </div>
    </footer>
  );
}

/* ---------- floating layers ---------- */

function ImeBar() {
  return (
    <div className="absolute bottom-[69px] right-[14px] z-20 flex h-[29px] w-[170px] items-center border border-r-0 border-[#ccc] bg-white pl-[3px]">
      <svg width="23" height="23" viewBox="0 0 23 23" aria-hidden="true">
        <circle cx="11.500" cy="11.500" r="10" fill="none" stroke="#4d7bfa" strokeWidth="2" />
        <text x="11.500" y="14.500" textAnchor="middle" fontFamily="Liberation Sans" fontWeight="bold" fontSize="7" fill="#4d7bfa">
          iFLY
        </text>
      </svg>
      <button aria-label="中文输入" className="ml-3">
        <Ico w={16} h={16} stroke="#4d7bfa" sw={2}>
          <path d="M1 4h14v7H1zM8 0v16" />
        </Ico>
      </button>
      <button aria-label="中文标点" className="ml-3">
        <Ico w={15} h={16} stroke="#4d7bfa" sw={2}>
          <circle cx="4" cy="4" r="2.200" />
          <circle cx="10.500" cy="10.500" r="2.500" fill="#4d7bfa" stroke="none" />
          <path d="M12.300 10q0 3.500-3 4.500" strokeWidth="1.500" />
        </Ico>
      </button>
      <button aria-label="语音输入" className="ml-[13px]">
        <Ico w={12} h={16} stroke="#4d7bfa" sw={1.600}>
          <rect x="3" y="0" width="6" height="11" rx="3" fill="#4d7bfa" stroke="none" />
          <path d="M.8 7v1.500q0 4 5.200 4t5.200-4V7M6 12.500V16" />
        </Ico>
      </button>
      <button aria-label="账号" className="ml-[14px]">
        <Ico w={14} h={16} stroke="none">
          <circle cx="7" cy="4.500" r="4" fill="#4d7bfa" />
          <path d="M.5 15.500q0-5.500 4-5.500h5q4 0 4 5.500z" fill="#4d7bfa" />
        </Ico>
      </button>
      <button aria-label="工具箱" className="ml-3">
        <Ico w={16} h={15} stroke="none">
          <path d="M1 1h6v6H1zM1 9h6v6H1zM9 9h6v6H9zM12 0l4 4-4 4-4-4z" fill="#4d7bfa" />
        </Ico>
      </button>
    </div>
  );
}

function CapsLock() {
  return (
    <div className="pointer-events-none absolute left-[903px] top-[21px] z-20 size-[115px] rounded-[3px] bg-black/40">
      <svg width="115" height="115" viewBox="0 0 115 115" role="img" aria-label="大写锁定">
        <mask id="letter">
          <rect width="115" height="115" fill="#fff" />
          <text x="58" y="92" textAnchor="middle" fontFamily="Liberation Sans" fontWeight="bold" fontSize="54" fill="#000">
            A
          </text>
        </mask>
        <path
          mask="url(#letter)"
          fill="#fff"
          fillRule="evenodd"
          d="M25 46a33 33 0 0166 0v51q0 5-5 5H30q-5 0-5-5zM34 45h48C81 31 70 22 58 22S35 31 34 45z"
        />
      </svg>
    </div>
  );
}

export default function App() {
  return (
    <div className="relative flex h-screen flex-col overflow-hidden bg-[#d8d8d8] font-['Noto_Sans','Noto_Sans_CJK_SC',sans-serif]">
      <TitleBar />
      <MenuBar />
      <Ribbon />
      <FormulaBar />
      <Sheet />
      <SheetTabs />
      <StatusBar />
      <ImeBar />
      <div className="pointer-events-none absolute left-[7px] top-[29px] z-30 h-[392px] w-[917px] rounded-[2px] border-[3px] border-[#ff2010]" />
      <CapsLock />
    </div>
  );
}
